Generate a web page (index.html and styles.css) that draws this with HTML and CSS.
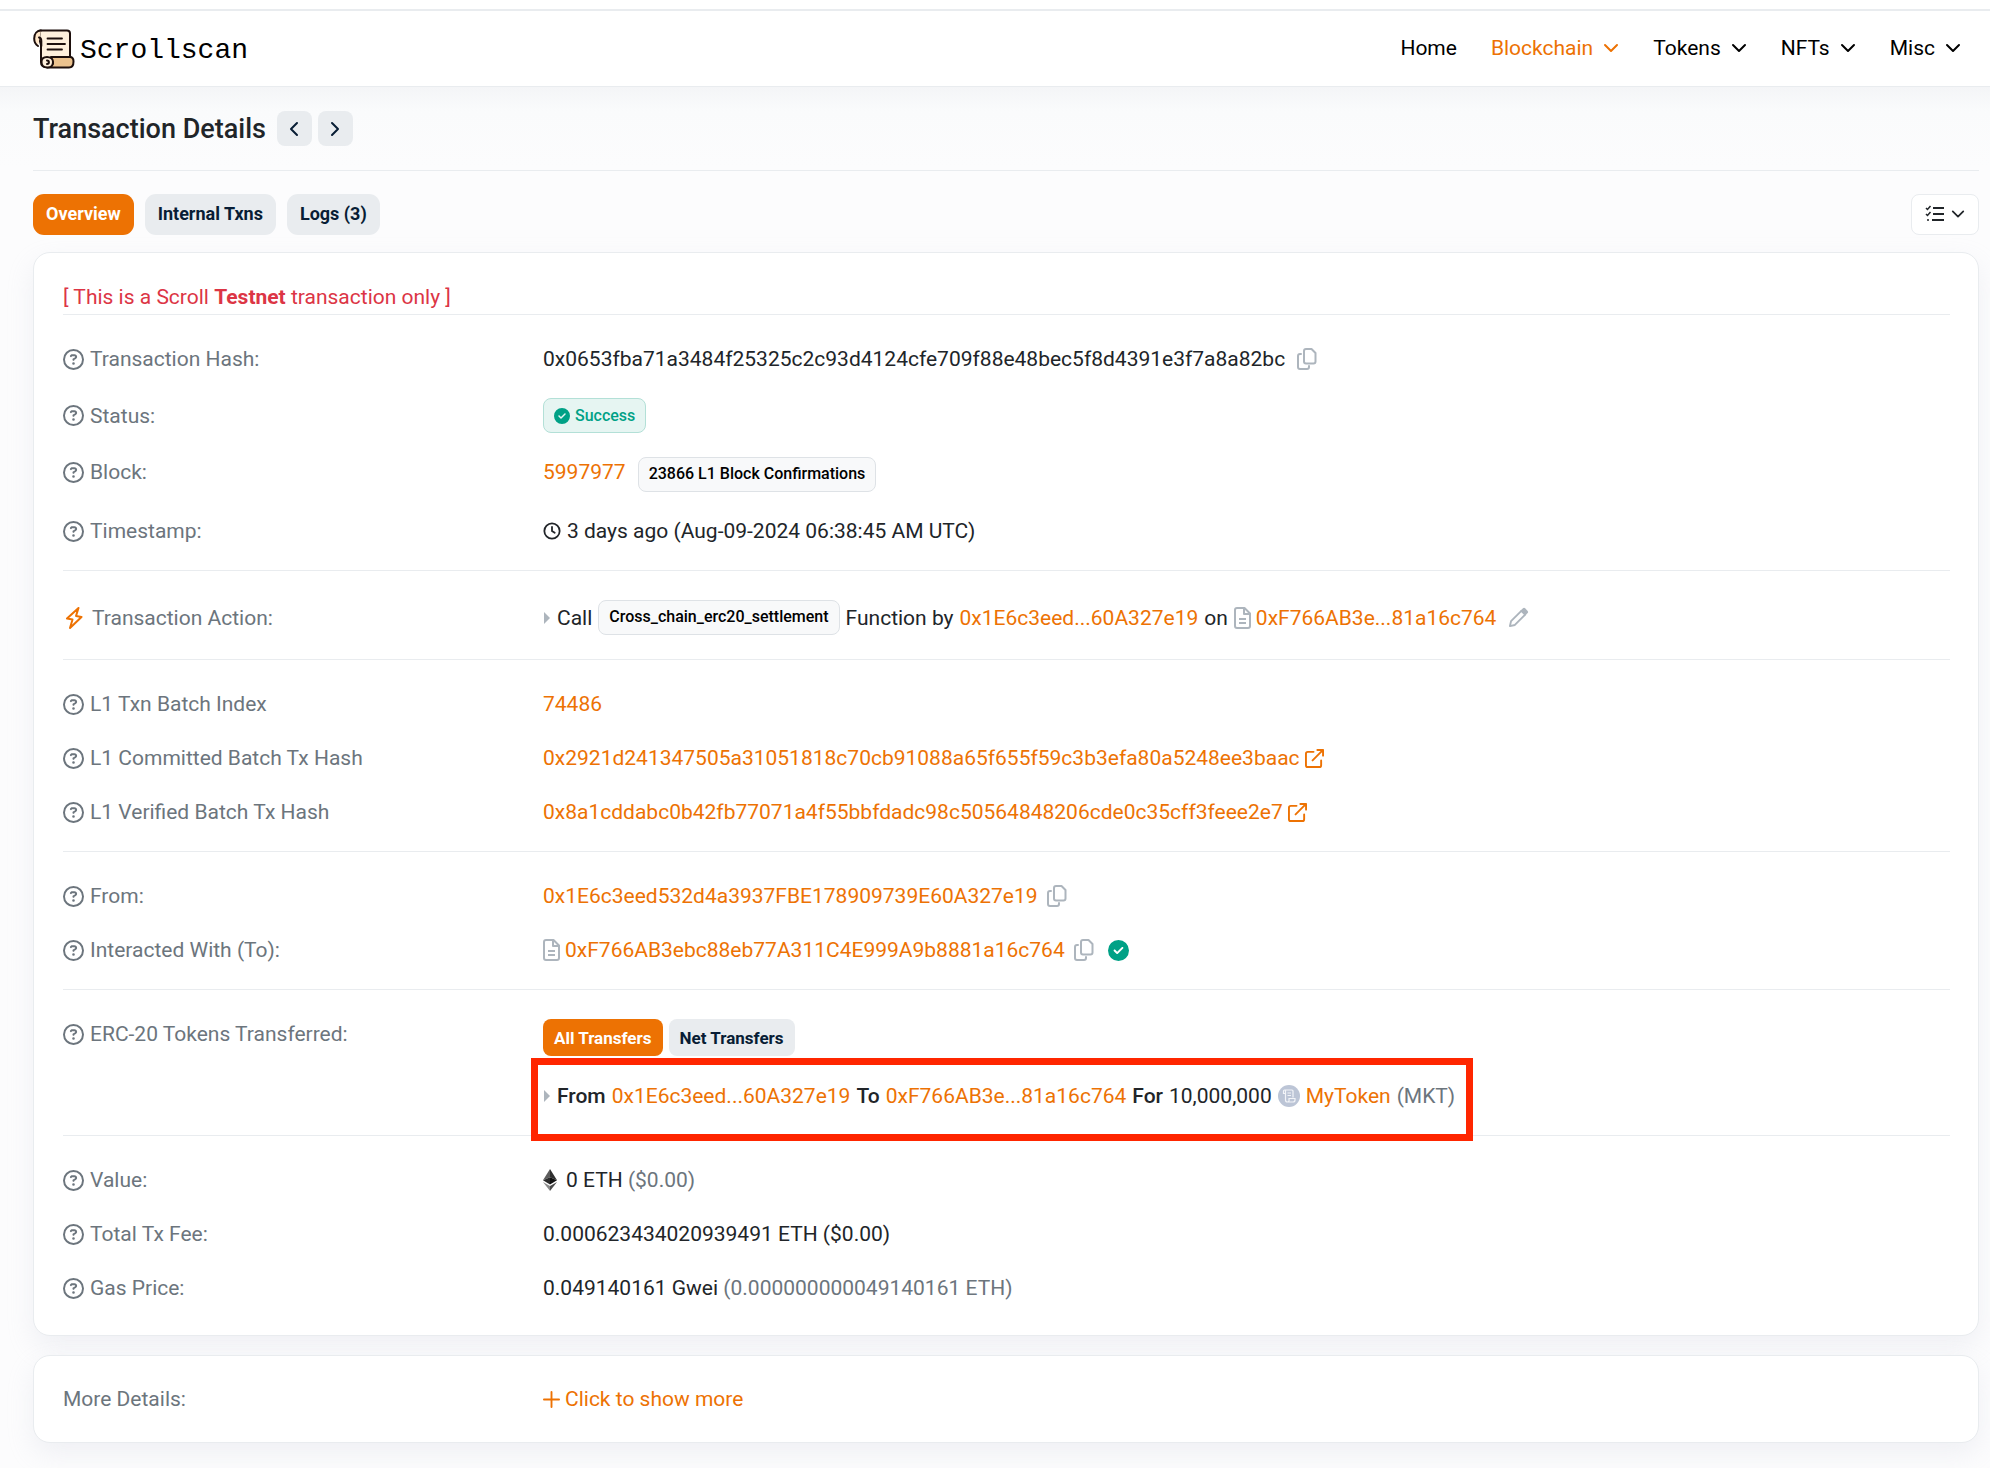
FILE: index.html
```html
<!DOCTYPE html>
<html lang="en">
<head>
<meta charset="utf-8">
<meta name="viewport" content="width=device-width, initial-scale=1">
<title>Transaction Details | Scrollscan</title>
<link rel="stylesheet" href="styles.css">
</head>
<body>
<svg class="sprite" aria-hidden="true">
  <symbol id="help" viewBox="0 0 512 512"><path fill="currentColor" d="M464 256A208 208 0 1 0 48 256a208 208 0 1 0 416 0zM0 256a256 256 0 1 1 512 0A256 256 0 1 1 0 256zm169.8-90.7c7.9-22.3 29.1-37.3 52.8-37.3h58.3c34.9 0 63.1 28.3 63.1 63.1c0 22.6-12.1 43.5-31.7 54.8L280 264.4c-.2 13-10.9 23.6-24 23.6c-13.3 0-24-10.7-24-24V250.5c0-8.6 4.6-16.5 12.1-20.8l44.3-25.4c4.7-2.7 7.6-7.7 7.6-13.1c0-8.4-6.8-15.1-15.1-15.1H222.6c-3.4 0-6.4 2.1-7.5 5.3l-.4 1.2c-4.4 12.5-18.2 19-30.6 14.6s-19-18.2-14.6-30.6l.4-1.2zM224 352a32 32 0 1 1 64 0 32 32 0 1 1-64 0z"/></symbol>
  <symbol id="check" viewBox="0 0 512 512"><path fill="currentColor" d="M256 512A256 256 0 1 0 256 0a256 256 0 1 0 0 512zM369 209L241 337c-9.4 9.4-24.6 9.4-33.9 0l-64-64c-9.4-9.4-9.4-24.6 0-33.9s24.6-9.4 33.9 0l47 47L335 175c9.4-9.4 24.6-9.4 33.9 0s9.4 24.6 0 33.9z"/></symbol>
  <symbol id="down" viewBox="0 0 16 16"><path d="M2 5l6 6 6-6" fill="none" stroke="currentColor" stroke-width="2" stroke-linecap="round" stroke-linejoin="round"/></symbol>
  <symbol id="left" viewBox="0 0 16 16"><path d="M11 2L5 8l6 6" fill="none" stroke="currentColor" stroke-width="2" stroke-linecap="round" stroke-linejoin="round"/></symbol>
  <symbol id="right" viewBox="0 0 16 16"><path d="M5 2l6 6-6 6" fill="none" stroke="currentColor" stroke-width="2" stroke-linecap="round" stroke-linejoin="round"/></symbol>
  <symbol id="copy" viewBox="0 0 20 22"><g fill="none" stroke="currentColor" stroke-width="2" stroke-linejoin="round" stroke-linecap="round"><path d="M9 1h5.500l4 4v8.500a2 2 0 0 1-2 2H9a2 2 0 0 1-2-2V3a2 2 0 0 1 2-2z"/><path d="M4 6H3a2 2 0 0 0-2 2v11a2 2 0 0 0 2 2h7a2 2 0 0 0 2-2v-1"/></g></symbol>
  <symbol id="doc" viewBox="0 0 17 22"><g fill="none" stroke="currentColor" stroke-width="2" stroke-linejoin="round"><path d="M3 1h7.500L16 6.500V19a2 2 0 0 1-2 2H3a2 2 0 0 1-2-2V3a2 2 0 0 1 2-2z"/><path d="M10 1v6h6M5 12h7M5 16h7"/></g></symbol>
  <symbol id="external" viewBox="0 0 20 20"><g fill="none" stroke="currentColor" stroke-width="2" stroke-linejoin="round" stroke-linecap="round"><path d="M9 3H3a2 2 0 0 0-2 2v12a2 2 0 0 0 2 2h12a2 2 0 0 0 2-2v-5M13 1h6v6M19 1L8 12"/></g></symbol>
  <symbol id="bolt" viewBox="0 0 18 22"><path d="M13.500 1L2 11.500l5.500 1L5 21 16.500 10l-5.500-1z" fill="none" stroke="currentColor" stroke-width="2" stroke-linejoin="round"/></symbol>
  <symbol id="clock" viewBox="0 0 20 20"><g fill="none" stroke="currentColor" stroke-width="2" stroke-linecap="round"><circle cx="10" cy="10" r="8.500"/><path d="M10 5.500V10l3 2"/></g></symbol>
  <symbol id="pencil" viewBox="0 0 22 22"><path d="M2 20l1.200-5.200L14 4l4 4L7.200 18.800z" fill="none" stroke="currentColor" stroke-width="2" stroke-linejoin="round"/><path d="M13 4l2.400-2.400a2 2 0 0 1 2.800 0l2.200 2.200a2 2 0 0 1 0 2.800L18 9z" fill="currentColor"/></symbol>
  <symbol id="caret" viewBox="0 0 8 12"><path d="M1 0l6 6-6 6z" fill="currentColor"/></symbol>
  <symbol id="plus" viewBox="0 0 18 18"><path d="M9 1v16M1 9h16" stroke="currentColor" stroke-width="2" stroke-linecap="round"/></symbol>
</svg>

<header class="site-header">
  <a class="brand" href="#">
    <svg class="brand-icon" viewBox="0 0 42 40" aria-hidden="true">
      <g stroke="#1d0f0c" stroke-width="2" stroke-linejoin="round" stroke-linecap="round">
        <path fill="#fff0dc" d="M7 1.500h27a3 3 0 0 1 3 3V28H20l-6 10c-4 0-6-2-6-5V16L6 9z"/>
        <path fill="#ffe6c8" d="M5 17C2.500 15.500 1.200 12.500 1.200 9.500c0-5 3-8 6.800-8"/>
        <path fill="none" d="M6 8.500c2 0 2.300 1.500 2.300 3.500V17"/>
        <path fill="#ebc28e" d="M18 28h19c2.500 0 3.500 2 3.500 4.500s-1 6-4.500 6H14c3 0 5-1.500 6-4z"/>
        <path fill="#fff0dc" d="M14.500 38.500c-4 0-6-2.500-6-5.500s2.200-5 5.500-5c3.500 0 6 2 6 5s-2 5.500-5.500 5.500z"/>
        <path fill="none" d="M14 31.500c2.500 0 2.500 3.500 0 3.500"/>
        <path fill="none" stroke-width="1.800" d="M14.500 9.500H29M14.500 15H32M14.500 20.500H29"/>
      </g>
    </svg>
    <span class="brand-name">Scrollscan</span>
  </a>
  <nav class="main-nav">
    <a href="#">Home</a>
    <a class="is-active" href="#">Blockchain <svg class="i16"><use href="#down"/></svg></a>
    <a href="#">Tokens <svg class="i16"><use href="#down"/></svg></a>
    <a href="#">NFTs <svg class="i16"><use href="#down"/></svg></a>
    <a href="#">Misc <svg class="i16"><use href="#down"/></svg></a>
  </nav>
</header>

<main class="page">
  <div class="title-row">
    <h1>Transaction Details</h1>
    <button class="step" type="button" aria-label="Previous transaction"><svg class="i16"><use href="#left"/></svg></button>
    <button class="step" type="button" aria-label="Next transaction"><svg class="i16"><use href="#right"/></svg></button>
  </div>

  <div class="tab-row">
    <button class="tab is-active" type="button">Overview</button>
    <button class="tab" type="button">Internal Txns</button>
    <button class="tab" type="button">Logs (3)</button>
    <button class="view-menu" type="button" aria-label="View options">
      <svg class="i20" viewBox="0 0 20 20" aria-hidden="true"><g fill="none" stroke="currentColor" stroke-width="2"><path d="M8 4h11M8 10h11M7 16h12"/><path stroke-width="1.500" d="M1 4l1.500 1.500L5.500 2M1 10l1.500 1.500L5.500 8M2 16h2"/></g></svg>
      <svg class="i14"><use href="#down"/></svg>
    </button>
  </div>

  <section class="card">
    <p class="notice">[ This is a Scroll <strong>Testnet</strong> transaction only ]</p>

    <dl class="group">
      <div class="row"><dt><svg class="i21"><use href="#help"/></svg>Transaction Hash:</dt>
        <dd><span>0x0653fba71a3484f25325c2c93d4124cfe709f88e48bec5f8d4391e3f7a8a82bc</span><button class="icon-btn" type="button" aria-label="Copy hash"><svg class="copy"><use href="#copy"/></svg></button></dd></div>
      <div class="row middle"><dt><svg class="i21"><use href="#help"/></svg>Status:</dt>
        <dd><span class="badge success"><svg class="i16"><use href="#check"/></svg>Success</span></dd></div>
      <div class="row"><dt><svg class="i21"><use href="#help"/></svg>Block:</dt>
        <dd class="wide"><a href="#">5997977</a><span class="badge">23866 L1 Block Confirmations</span></dd></div>
      <div class="row"><dt><svg class="i21"><use href="#help"/></svg>Timestamp:</dt>
        <dd><svg class="i18"><use href="#clock"/></svg><span>3 days ago (Aug-09-2024 06:38:45 AM UTC)</span></dd></div>
    </dl>

    <dl class="group">
      <div class="row middle"><dt class="action"><svg class="bolt"><use href="#bolt"/></svg>Transaction Action:</dt>
        <dd><svg class="caret"><use href="#caret"/></svg><span>Call</span><span class="badge">Cross_chain_erc20_settlement</span><span>Function by</span><a href="#">0x1E6c3eed...60A327e19</a><span>on</span><a class="with-icon" href="#"><svg class="doc"><use href="#doc"/></svg>0xF766AB3e...81a16c764</a><button class="icon-btn" type="button" aria-label="Edit note"><svg class="i21"><use href="#pencil"/></svg></button></dd></div>
    </dl>

    <dl class="group">
      <div class="row"><dt><svg class="i21"><use href="#help"/></svg>L1 Txn Batch Index</dt>
        <dd><a href="#">74486</a></dd></div>
      <div class="row"><dt><svg class="i21"><use href="#help"/></svg>L1 Committed Batch Tx Hash</dt>
        <dd><a class="with-icon" href="#">0x2921d241347505a31051818c70cb91088a65f655f59c3b3efa80a5248ee3baac<svg class="i19"><use href="#external"/></svg></a></dd></div>
      <div class="row"><dt><svg class="i21"><use href="#help"/></svg>L1 Verified Batch Tx Hash</dt>
        <dd><a class="with-icon" href="#">0x8a1cddabc0b42fb77071a4f55bbfdadc98c50564848206cde0c35cff3feee2e7<svg class="i19"><use href="#external"/></svg></a></dd></div>
    </dl>

    <dl class="group">
      <div class="row"><dt><svg class="i21"><use href="#help"/></svg>From:</dt>
        <dd><a href="#">0x1E6c3eed532d4a3937FBE178909739E60A327e19</a><button class="icon-btn near" type="button" aria-label="Copy sender"><svg class="copy"><use href="#copy"/></svg></button></dd></div>
      <div class="row"><dt><svg class="i21"><use href="#help"/></svg>Interacted With (To):</dt>
        <dd><a class="with-icon" href="#"><svg class="doc"><use href="#doc"/></svg>0xF766AB3ebc88eb77A311C4E999A9b8881a16c764</a><button class="icon-btn near" type="button" aria-label="Copy contract"><svg class="copy"><use href="#copy"/></svg></button><svg class="i21 verified"><use href="#check"/></svg></dd></div>
    </dl>

    <dl class="group">
      <div class="row"><dt><svg class="i21"><use href="#help"/></svg>ERC-20 Tokens Transferred:</dt>
        <dd class="stack">
          <div class="pills">
            <button class="pill is-active" type="button">All Transfers</button>
            <button class="pill" type="button">Net Transfers</button>
          </div>
          <div class="transfer">
            <svg class="caret"><use href="#caret"/></svg><b>From</b><a href="#">0x1E6c3eed...60A327e19</a><b>To</b><a href="#">0xF766AB3e...81a16c764</a><b>For</b><span>10,000,000</span>
            <svg class="token" viewBox="0 0 22 22" aria-hidden="true"><circle cx="11" cy="11" r="11" fill="#bcc5d6"/><g fill="none" stroke="#f2f4f8" stroke-width="1.200"><path d="M7 8.500H5.500V6a1 1 0 0 1 1-1H14a1 1 0 0 1 1 1v6.500M7.500 5.500V15a2 2 0 0 0 2 2H15a2 2 0 0 0 2-2v-1.500h-6V15a1.500 1.500 0 0 1-1.500 2M9.500 8h3.500M9.500 10.500h3.500"/></g></svg>
            <a href="#">MyToken</a><span class="muted">(MKT)</span>
          </div>
        </dd></div>
    </dl>

    <dl class="group">
      <div class="row"><dt><svg class="i21"><use href="#help"/></svg>Value:</dt>
        <dd><svg class="eth" viewBox="0 0 14 22" aria-hidden="true"><path fill="#5c5c5c" d="M7 0L0 11.300 7 8.200z"/><path fill="#303030" d="M7 0l7 11.300L7 8.200z"/><path fill="#2b2b2b" d="M0 11.300L7 8.200v7.200z"/><path fill="#111" d="M14 11.300L7 8.200v7.200z"/><path fill="#8a8a8a" d="M0 13l7 4v5z"/><path fill="#4a4a4a" d="M14 13l-7 4v5z"/></svg><span>0 ETH <span class="muted">($0.00)</span></span></dd></div>
      <div class="row"><dt><svg class="i21"><use href="#help"/></svg>Total Tx Fee:</dt>
        <dd>0.000623434020939491 ETH ($0.00)</dd></div>
      <div class="row"><dt><svg class="i21"><use href="#help"/></svg>Gas Price:</dt>
        <dd><span>0.049140161 Gwei <span class="muted">(0.000000000049140161 ETH)</span></span></dd></div>
    </dl>
  </section>

  <section class="card more">
    <dl class="row"><dt>More Details:</dt>
      <dd><a class="with-icon" href="#"><svg class="i17"><use href="#plus"/></svg>Click to show more</a></dd></dl>
  </section>
</main>
</body>
</html>
```
FILE: styles.css
```css
* { box-sizing: border-box; }

html { background: #fff; }
body {
  margin: 0;
  color: #212529;
  font: 400 21px/30px Roboto, "Liberation Sans", sans-serif;
}

a { color: #ed7203; text-decoration: none; }
button { font: inherit; border: 0; padding: 0; cursor: pointer; }
svg { display: block; flex: none; }
dl, dd, p, h1 { margin: 0; }

.sprite { position: absolute; width: 0; height: 0; }
.i14 { width: 14px; height: 14px; }
.i16 { width: 16px; height: 16px; }
.i17 { width: 17px; height: 17px; }
.i18 { width: 18px; height: 18px; }
.i19 { width: 19px; height: 19px; }
.i20 { width: 20px; height: 20px; }
.i21 { width: 21px; height: 21px; }
.copy { width: 20px; height: 22px; }
.doc { width: 17px; height: 22px; color: #adb5bd; }
.bolt { width: 18px; height: 22px; color: #ed7203; }
.caret { width: 8px; height: 12px; color: #adb5bd; }
.eth { width: 14px; height: 22px; margin-right: 3px; }
.token { width: 22px; height: 22px; }
.muted { color: #6c757d; }

/* Header */
.site-header {
  display: flex;
  align-items: center;
  justify-content: space-between;
  height: 78px;
  margin-top: 9px;
  padding: 0 29px 0 33px;
  background: #fff;
  border-top: 2px solid #e9ecef;
  border-bottom: 1px solid #e9ecef;
}
.brand { display: flex; align-items: center; gap: 5px; color: #000; }
.brand-icon { width: 42px; height: 40px; }
.brand-name {
  padding-top: 4px;
  font: 400 28px/40px "Liberation Mono", monospace;
}
.main-nav { display: flex; gap: 34px; padding-bottom: 2px; }
.main-nav a { display: flex; align-items: center; gap: 10px; color: #000; }
.main-nav .is-active { color: #ed7203; }

/* Page */
.page {
  padding: 24px 11px 27px 33px;
  background: linear-gradient(#f4f5f7, #fafbfc 24px, #fcfcfd 80px);
}
.title-row {
  display: flex;
  align-items: center;
  gap: 6px;
  padding-bottom: 24px;
  border-bottom: 1px solid #e9ecef;
}
h1 { margin-right: 5px; padding-top: 1px; font-size: 27px; line-height: 34px; font-weight: 500; }
.step {
  display: grid;
  place-items: center;
  width: 35px;
  height: 35px;
  border-radius: 8px;
  background: #e9ecef;
  color: #081d35;
}
.tab-row { display: flex; gap: 11px; margin: 23px 0 17px; }
.tab {
  height: 41px;
  padding: 0 13px 2px;
  border-radius: 11px;
  background: #e9ecef;
  color: #081d35;
  font-size: 18px;
  font-weight: 700;
}
.tab.is-active, .pill.is-active { background: #ed7203; color: #fff; }
.view-menu {
  display: flex;
  align-items: center;
  gap: 6px;
  height: 41px;
  margin-left: auto;
  padding: 0 13px 2px;
  border: 1px solid #e9ecef;
  border-radius: 8px;
  background: #fff;
  color: #212529;
}

/* Cards */
.card {
  padding: 29px 28px 32px 29px;
  border: 1px solid #e9ecef;
  border-radius: 17px;
  background: #fff;
  box-shadow: 0 11px 27px rgba(189, 197, 209, 0.2);
}
.card.more { margin-top: 19px; padding: 28px 28px 28px 29px; }
.notice { padding-bottom: 2px; color: #dc3545; }
.group {
  display: grid;
  gap: 24px;
  padding: 29px 0 24px;
  border-top: 1px solid #e9ecef;
}
.group:last-child { padding-bottom: 0; }
.row { display: grid; grid-template-columns: 1fr 3fr; column-gap: 11px; align-items: start; }
.row.middle { align-items: center; }
.row > * { min-width: 0; }
dt { display: flex; align-items: center; gap: 6px; color: #6c757d; }
dt.action { gap: 9px; padding-left: 2px; }
dd { display: flex; align-items: center; flex-wrap: wrap; gap: 0 6px; }
dd.wide { align-items: flex-start; gap: 12px; }
dd.stack { display: grid; justify-items: start; gap: 25px; }
.with-icon { display: inline-flex; align-items: center; gap: 5px; }
.icon-btn { margin-left: 6px; background: none; color: #adb5bd; }
.icon-btn.near { margin-left: 3px; }
.verified { margin-left: 8px; color: #00a186; }

.badge {
  display: inline-flex;
  align-items: center;
  gap: 5px;
  height: 35px;
  padding: 0 10px 2px;
  border: 1px solid #dee2e6;
  border-radius: 8px;
  background: #f8f9fa;
  color: #000;
  font-size: 16px;
  font-weight: 500;
}
.badge.success {
  padding-bottom: 0;
  border-color: #b3e0d7;
  background: #e6f5f2;
  color: #00a186;
}

.pills { display: flex; gap: 6px; }
.pill {
  height: 37px;
  padding: 0 11px;
  border-radius: 8px;
  background: #e9ecef;
  color: #081d35;
  font-size: 17px;
  font-weight: 700;
}
.transfer {
  position: relative;
  display: flex;
  align-items: center;
  flex-wrap: wrap;
  gap: 0 6px;
}
.transfer b { font-weight: 500; }
/* Highlight frame over the transfer line */
.transfer::after {
  content: "";
  position: absolute;
  inset: -23px -18px -30px -12px;
  border: 7px solid #ff2600;
  pointer-events: none;
}
```
